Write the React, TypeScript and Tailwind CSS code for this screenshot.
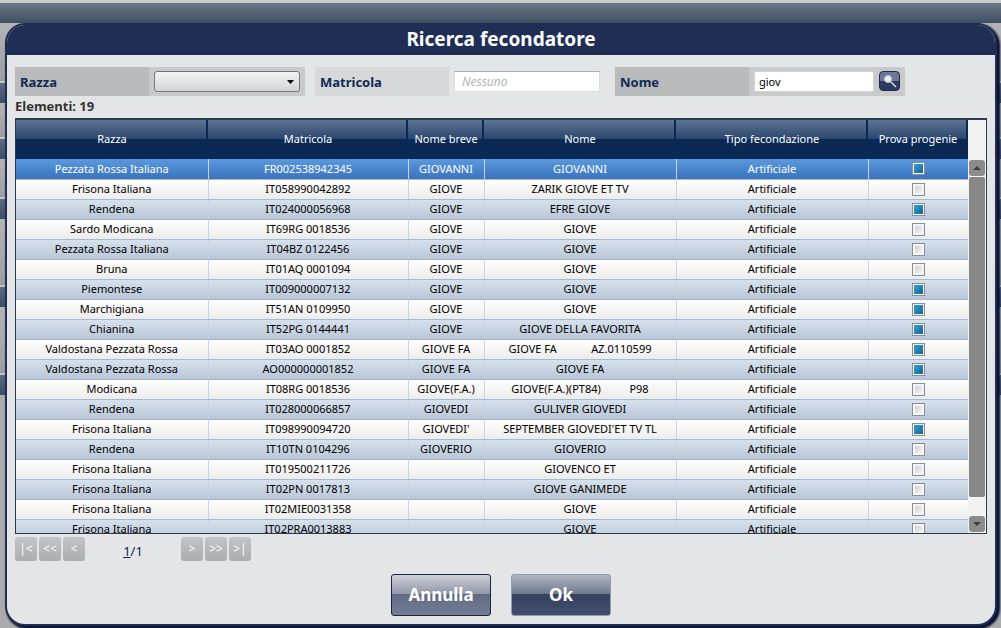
import React from "react";

const rows = [
  ["Pezzata Rossa Italiana", "FR002538942345", "GIOVANNI", "GIOVANNI", true],
  ["Frisona Italiana", "IT058990042892", "GIOVE", "ZARIK GIOVE ET TV", false],
  ["Rendena", "IT024000056968", "GIOVE", "EFRE GIOVE", true],
  ["Sardo Modicana", "IT69RG 0018536", "GIOVE", "GIOVE", false],
  ["Pezzata Rossa Italiana", "IT04BZ 0122456", "GIOVE", "GIOVE", false],
  ["Bruna", "IT01AQ 0001094", "GIOVE", "GIOVE", false],
  ["Piemontese", "IT009000007132", "GIOVE", "GIOVE", true],
  ["Marchigiana", "IT51AN 0109950", "GIOVE", "GIOVE", true],
  ["Chianina", "IT52PG 0144441", "GIOVE", "GIOVE DELLA FAVORITA", true],
  ["Valdostana Pezzata Rossa", "IT03AO 0001852", "GIOVE FA", "GIOVE FA            AZ.0110599", true],
  ["Valdostana Pezzata Rossa", "AO000000001852", "GIOVE FA", "GIOVE FA", true],
  ["Modicana", "IT08RG 0018536", "GIOVE(F.A.)", "GIOVE(F.A.)(PT84)          P98", false],
  ["Rendena", "IT028000066857", "GIOVEDI", "GULIVER GIOVEDI", false],
  ["Frisona Italiana", "IT098990094720", "GIOVEDI'", "SEPTEMBER GIOVEDI'ET TV TL", true],
  ["Rendena", "IT10TN 0104296", "GIOVERIO", "GIOVERIO", false],
  ["Frisona Italiana", "IT019500211726", "", "GIOVENCO ET", false],
  ["Frisona Italiana", "IT02PN 0017813", "", "GIOVE GANIMEDE", false],
  ["Frisona Italiana", "IT02MIE0031358", "", "GIOVE", false],
  ["Frisona Italiana", "IT02PRA0013883", "", "GIOVE", false],
] as const;

const columns = [
  "Razza",
  "Matricola",
  "Nome breve",
  "Nome",
  "Tipo fecondazione",
  "Prova progenie",
];

// altezza dello spazio sopra ogni barra della pagina sotto la finestra
const backdropGaps = ["h-[58px]", "h-[34px]", "h-[38px]", "h-[66px]", "h-[66px]"];

const PagerButton = ({ label, text }: { label: string; text: string }) => (
  <button
    aria-label={label}
    className="h-6 w-[22px] rounded-[3px] bg-linear-to-b from-[#c3c4c5] to-[#acadae] text-xs leading-5 text-white"
  >
    {text}
  </button>
);

const App: React.FC = () => {
  return (
    <div className="relative isolate h-screen overflow-hidden bg-[#a9abad] font-['Noto_Sans',sans-serif] text-black">
      <div className="h-[3px] bg-[#c9cacb]" />
      <div className="h-5 bg-linear-to-b from-[#6b7785] to-[#3f4f63]" />

      {/* Pagina oscurata dietro la finestra */}
      <div className="absolute inset-x-0 top-[23px] -z-10">
        {backdropGaps.map((gap, i) => (
          <div key={i}>
            <div className={`${gap} bg-linear-to-b from-[#b3b4b5] to-[#9c9d9e]`} />
            <div className="h-[22px] border-t-2 border-[#c4c5c6] bg-linear-to-b from-[#5d6b80] to-[#3d4d69]" />
          </div>
        ))}
      </div>

      <div className="mr-1 ml-[5px] flex h-[603px] flex-col overflow-hidden rounded-[20px] border-2 border-[#202e55] bg-[#e3e5e7] shadow-[2px_2px_2px_1px_#0c1230]">
        <h1 className="h-[30px] shrink-0 bg-[#202e55] text-center text-[19px] leading-7 font-bold text-white">
          Ricerca fecondatore
        </h1>

        <div className="flex flex-col px-2 pt-3">
          {/* Filtri */}
          <form className="flex gap-[10px]">
            <div className="flex h-[29px] w-[290px] bg-[#c9cacb]">
              <label
                htmlFor="razza"
                className="w-[134px] bg-[#b9babb] pl-[5px] text-[13px] leading-[30px] font-bold text-[#0f2a56]"
              >
                Razza
              </label>
              <div className="relative mx-[5px] my-1 flex-1">
                <select
                  id="razza"
                  className="h-[21px] w-full appearance-none rounded-[3px] border border-[#777] bg-linear-to-b from-[#f3f3f3] to-[#d3d4d5]"
                >
                  <option></option>
                </select>
                <svg viewBox="0 0 7 4" className="pointer-events-none absolute top-[9px] right-[6px] h-1 w-[7px]">
                  <path d="M0 0h7L3.500 4z" />
                </svg>
              </div>
            </div>
            <div className="flex h-[29px] w-[290px]">
              <label
                htmlFor="matricola"
                className="w-[134px] bg-[#d6d8da] pl-[5px] text-[13px] leading-[30px] font-bold text-[#0f2a56]"
              >
                Matricola
              </label>
              <input
                id="matricola"
                placeholder="Nessuno"
                className="mx-[5px] my-1 h-[21px] min-w-0 flex-1 border border-[#dcdee0] border-t-[#a9abad] bg-white px-[7px] text-xs placeholder:text-[#b5b5b5] placeholder:italic"
              />
            </div>
            <div className="flex h-[29px] w-[290px] bg-[#c9cacb]">
              <label
                htmlFor="nome"
                className="w-[134px] bg-[#b9babb] pl-[5px] text-[13px] leading-[30px] font-bold text-[#0f2a56]"
              >
                Nome
              </label>
              <input
                id="nome"
                defaultValue="giov"
                className="my-1 ml-[5px] h-[21px] min-w-0 flex-1 border border-[#d0d2d4] bg-white px-1 text-[11px]"
              />
              <button
                type="button"
                aria-label="Cerca"
                className="mx-[5px] my-1 h-5 w-[21px] rounded-[4px] border border-[#1e2b50] bg-linear-to-b from-[#6d7894] from-50% to-[#2c3a60] to-50%"
              >
                <svg viewBox="0 0 19 18" className="h-[18px] w-[19px]">
                  <path d="M10 9l6 6" stroke="#d5dae4" strokeWidth="1.500" />
                  <circle cx="8" cy="7" r="3.500" fill="#e9f0f4" stroke="#bcc8d4" />
                </svg>
              </button>
            </div>
          </form>

          <p className="h-[22px] text-[13px] leading-5 font-bold text-[#333]">Elementi: 19</p>

          {/* Griglia risultati */}
          <div className="flex h-[416px] border border-t-2 border-[#2b3b4e] bg-[#f2f2f2]">
            <div className="min-w-0 flex-1 overflow-hidden">
              <table className="w-full table-fixed border-collapse text-center text-[11px]">
                <colgroup>
                  <col className="w-[192px]" />
                  <col className="w-[200px]" />
                  <col className="w-[76px]" />
                  <col className="w-[192px]" />
                  <col className="w-[192px]" />
                  <col />
                </colgroup>
                <thead>
                  <tr className="h-[39px] bg-[#0a2a55] bg-linear-to-b from-[#5f7491] via-[#2a456d] via-50% to-[#0a2a55] to-50%">
                    {columns.map((column) => (
                      <th
                        key={column}
                        className="bg-linear-to-b from-[#0a2a55] to-[#0a2a55] bg-[length:2px_100%] bg-right bg-no-repeat p-0 font-normal whitespace-nowrap text-white"
                      >
                        {column}
                      </th>
                    ))}
                  </tr>
                </thead>
                <tbody>
                  {rows.map(([razza, matricola, breve, nome, prova], i) => (
                    <tr
                      key={matricola}
                      className={
                        i === 0
                          ? "h-5 bg-linear-to-b from-[#5b9ade] to-[#3a72be] text-white"
                          : i % 2
                            ? "h-5 bg-linear-to-b from-white to-[#ececea]"
                            : "h-5 bg-linear-to-b from-[#d8e3ef] to-[#bac6d5]"
                      }
                    >
                      {[razza, matricola, breve, nome, "Artificiale"].map((text, c) => (
                        <td
                          key={c}
                          className="border-r border-b border-r-[#c8d4e4] border-b-[#a3b9d5] p-0 leading-[18px] whitespace-pre"
                        >
                          {text}
                        </td>
                      ))}
                      <td className="border-b border-b-[#a3b9d5] p-0">
                        <input
                          type="checkbox"
                          aria-label={`Prova progenie ${matricola}`}
                          defaultChecked={prova}
                          className="mx-auto block size-[13px] appearance-none border border-[#8a8d91] bg-linear-to-br from-[#c3c6ca] to-white shadow-[inset_0_0_0_2px_#f5f5f5] checked:from-[#3aa5d6] checked:to-[#0f5f95] checked:shadow-[inset_0_0_0_1px_#f5f5f5]"
                        />
                      </td>
                    </tr>
                  ))}
                </tbody>
              </table>
            </div>
            <div className="flex w-[18px] flex-col gap-px px-px pt-10">
              <button aria-label="Su" className="flex h-4 items-center justify-center rounded-[3px] bg-[#8c8c8c]">
                <svg viewBox="0 0 8 4" className="h-1 w-2">
                  <path d="M0 4h8L4 0z" fill="#3c3c3c" />
                </svg>
              </button>
              <div className="h-[320px] rounded-[2px] bg-[#878787]" />
              <button aria-label="Giù" className="mt-auto mb-px flex h-4 items-center justify-center rounded-[3px] bg-[#8c8c8c]">
                <svg viewBox="0 0 8 4" className="h-1 w-2">
                  <path d="M0 0h8L4 4z" fill="#3c3c3c" />
                </svg>
              </button>
            </div>
          </div>

          {/* Paginazione */}
          <div className="mt-[3px] flex gap-[2px]">
            <PagerButton label="Prima pagina" text="|<" />
            <PagerButton label="Indietro veloce" text="<<" />
            <PagerButton label="Pagina precedente" text="<" />
            <div className="h-6 w-[92px] text-center text-[13px] leading-7 text-[#14284f]">
              <a href="#" className="underline">
                1
              </a>
              /1
            </div>
            <PagerButton label="Pagina successiva" text=">" />
            <PagerButton label="Avanti veloce" text=">>" />
            <PagerButton label="Ultima pagina" text=">|" />
          </div>
        </div>

        <div className="mt-[13px] flex justify-center gap-5">
          <button className="h-[42px] w-[100px] rounded-[3px] border border-[#1b2440] bg-[linear-gradient(#cfd1da,#8f95a6_48%,#616c84_48%,#737d95)] text-[17px] font-bold text-white">
            Annulla
          </button>
          <button className="h-[42px] w-[100px] rounded-[3px] border border-[#8e9cb5] bg-[linear-gradient(#b0b5c1,#6f788e_48%,#35415f_48%,#434e6e)] text-[17px] font-bold text-white">
            Ok
          </button>
        </div>
      </div>
    </div>
  );
};

export default App;
